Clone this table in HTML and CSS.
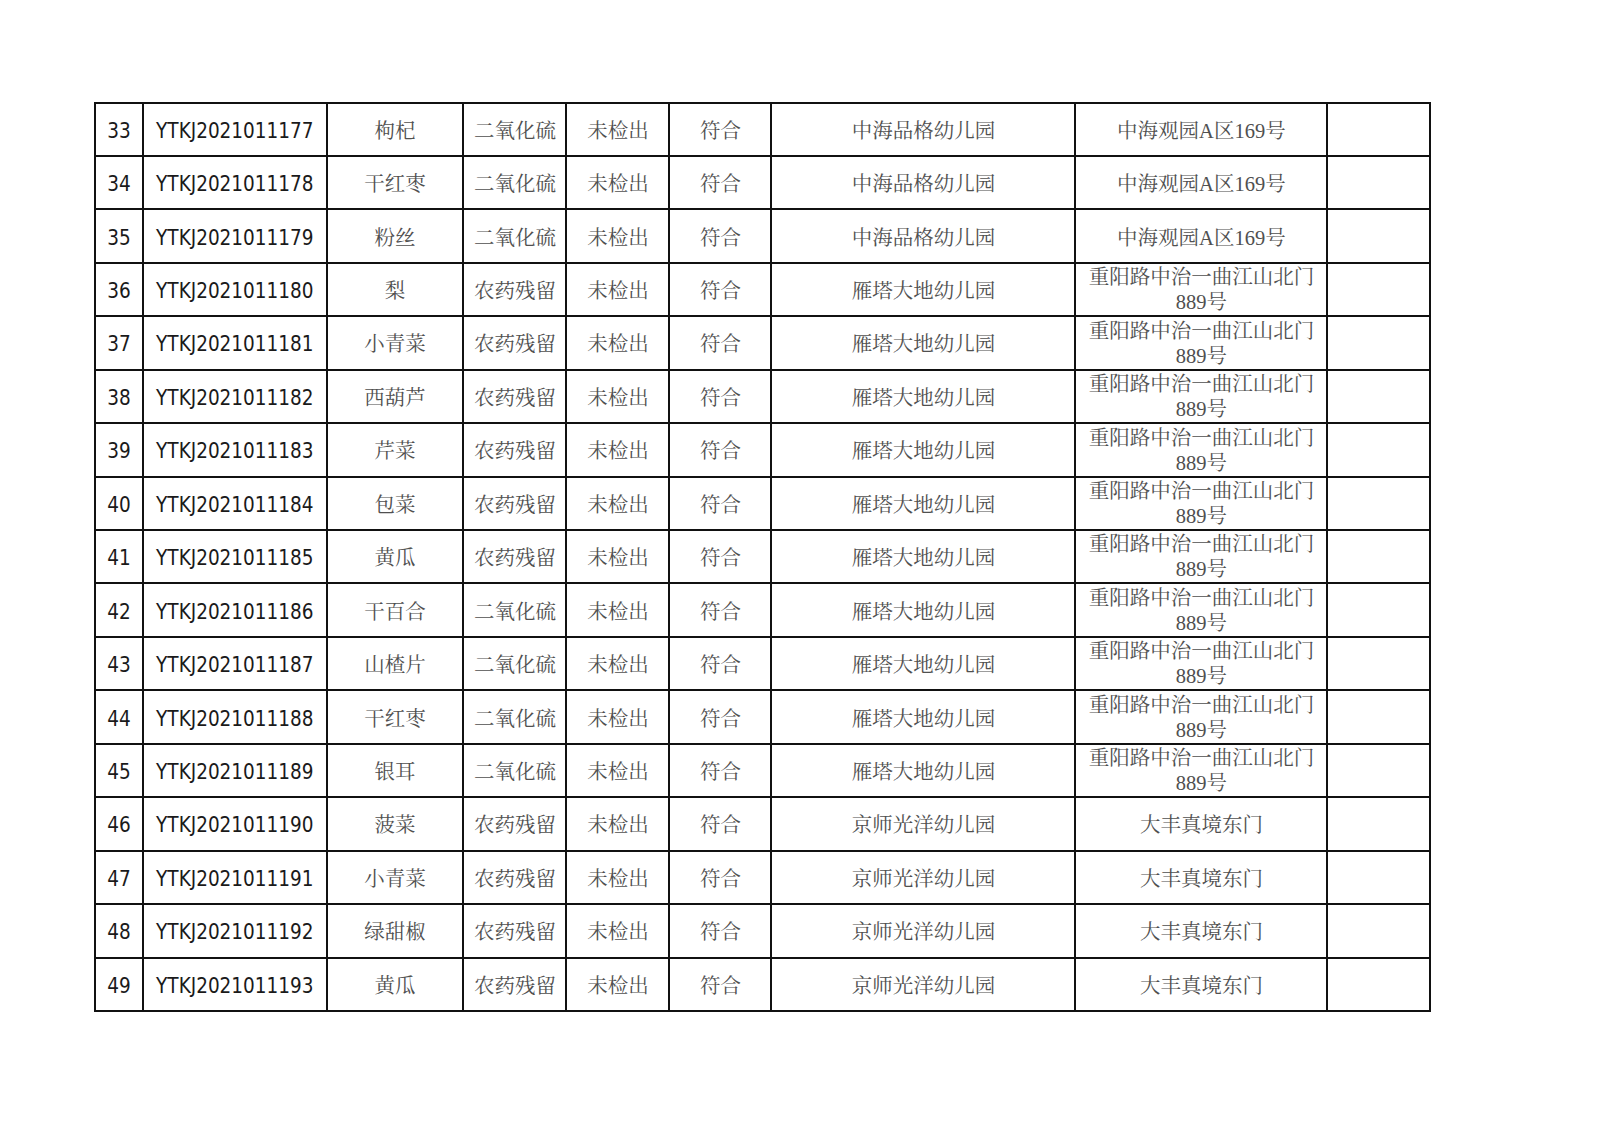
FILE: index.html
```html
<!DOCTYPE html>
<html lang="zh-CN">
<head>
<meta charset="utf-8">
<title>检测结果</title>
<link rel="stylesheet" href="styles.css">
</head>
<body>
<div class="page">
<table class="grid">
<colgroup>
<col class="c-no"><col class="c-code"><col class="c-name"><col class="c-item"><col class="c-res"><col class="c-judge"><col class="c-unit"><col class="c-addr"><col class="c-note">
</colgroup>
<tbody>
<tr><td class="num">33</td><td class="num">YTKJ2021011177</td><td>枸杞</td><td>二氧化硫</td><td>未检出</td><td>符合</td><td>中海品格幼儿园</td><td>中海观园A区169号</td><td></td></tr>
<tr><td class="num">34</td><td class="num">YTKJ2021011178</td><td>干红枣</td><td>二氧化硫</td><td>未检出</td><td>符合</td><td>中海品格幼儿园</td><td>中海观园A区169号</td><td></td></tr>
<tr><td class="num">35</td><td class="num">YTKJ2021011179</td><td>粉丝</td><td>二氧化硫</td><td>未检出</td><td>符合</td><td>中海品格幼儿园</td><td>中海观园A区169号</td><td></td></tr>
<tr><td class="num">36</td><td class="num">YTKJ2021011180</td><td>梨</td><td>农药残留</td><td>未检出</td><td>符合</td><td>雁塔大地幼儿园</td><td class="two">重阳路中治一曲江山北门<br>889号</td><td></td></tr>
<tr><td class="num">37</td><td class="num">YTKJ2021011181</td><td>小青菜</td><td>农药残留</td><td>未检出</td><td>符合</td><td>雁塔大地幼儿园</td><td class="two">重阳路中治一曲江山北门<br>889号</td><td></td></tr>
<tr><td class="num">38</td><td class="num">YTKJ2021011182</td><td>西葫芦</td><td>农药残留</td><td>未检出</td><td>符合</td><td>雁塔大地幼儿园</td><td class="two">重阳路中治一曲江山北门<br>889号</td><td></td></tr>
<tr><td class="num">39</td><td class="num">YTKJ2021011183</td><td>芹菜</td><td>农药残留</td><td>未检出</td><td>符合</td><td>雁塔大地幼儿园</td><td class="two">重阳路中治一曲江山北门<br>889号</td><td></td></tr>
<tr><td class="num">40</td><td class="num">YTKJ2021011184</td><td>包菜</td><td>农药残留</td><td>未检出</td><td>符合</td><td>雁塔大地幼儿园</td><td class="two">重阳路中治一曲江山北门<br>889号</td><td></td></tr>
<tr><td class="num">41</td><td class="num">YTKJ2021011185</td><td>黄瓜</td><td>农药残留</td><td>未检出</td><td>符合</td><td>雁塔大地幼儿园</td><td class="two">重阳路中治一曲江山北门<br>889号</td><td></td></tr>
<tr><td class="num">42</td><td class="num">YTKJ2021011186</td><td>干百合</td><td>二氧化硫</td><td>未检出</td><td>符合</td><td>雁塔大地幼儿园</td><td class="two">重阳路中治一曲江山北门<br>889号</td><td></td></tr>
<tr><td class="num">43</td><td class="num">YTKJ2021011187</td><td>山楂片</td><td>二氧化硫</td><td>未检出</td><td>符合</td><td>雁塔大地幼儿园</td><td class="two">重阳路中治一曲江山北门<br>889号</td><td></td></tr>
<tr><td class="num">44</td><td class="num">YTKJ2021011188</td><td>干红枣</td><td>二氧化硫</td><td>未检出</td><td>符合</td><td>雁塔大地幼儿园</td><td class="two">重阳路中治一曲江山北门<br>889号</td><td></td></tr>
<tr><td class="num">45</td><td class="num">YTKJ2021011189</td><td>银耳</td><td>二氧化硫</td><td>未检出</td><td>符合</td><td>雁塔大地幼儿园</td><td class="two">重阳路中治一曲江山北门<br>889号</td><td></td></tr>
<tr><td class="num">46</td><td class="num">YTKJ2021011190</td><td>菠菜</td><td>农药残留</td><td>未检出</td><td>符合</td><td>京师光洋幼儿园</td><td>大丰真境东门</td><td></td></tr>
<tr><td class="num">47</td><td class="num">YTKJ2021011191</td><td>小青菜</td><td>农药残留</td><td>未检出</td><td>符合</td><td>京师光洋幼儿园</td><td>大丰真境东门</td><td></td></tr>
<tr><td class="num">48</td><td class="num">YTKJ2021011192</td><td>绿甜椒</td><td>农药残留</td><td>未检出</td><td>符合</td><td>京师光洋幼儿园</td><td>大丰真境东门</td><td></td></tr>
<tr><td class="num">49</td><td class="num">YTKJ2021011193</td><td>黄瓜</td><td>农药残留</td><td>未检出</td><td>符合</td><td>京师光洋幼儿园</td><td>大丰真境东门</td><td></td></tr>
</tbody>
</table>
</div>
</body>
</html>
```
FILE: styles.css
```css
html, body {
  margin: 0;
  padding: 0;
  background: #ffffff;
}

.page {
  padding: 101.5px 0 0 94px;
}

.grid {
  border-collapse: collapse;
  table-layout: fixed;
  width: 1337px;
}

.c-no { width: 48px; }
.c-code { width: 183.6px; }
.c-name { width: 136.8px; }
.c-item { width: 103px; }
.c-res { width: 103px; }
.c-judge { width: 102px; }
.c-unit { width: 304px; }
.c-addr { width: 252px; }
.c-note { width: 103px; }

.grid td {
  border: 2px solid #111;
  height: 47.45px;
  padding: 4px 0 0 0;
  text-align: center;
  vertical-align: middle;
  font-family: "Liberation Serif", "Noto Serif CJK SC", "Noto Sans CJK SC", serif;
  font-size: 20.5px;
  color: #505050;
  line-height: 25px;
  white-space: nowrap;
  overflow: hidden;
}

.grid td.num {
  font-family: "DejaVu Sans Condensed", "DejaVu Sans", sans-serif;
  font-stretch: condensed;
  font-size: 20.5px;
  color: #1a1a1a;
}

.grid td.two {
  padding-top: 1.4px;
  line-height: 25px;
}
```
